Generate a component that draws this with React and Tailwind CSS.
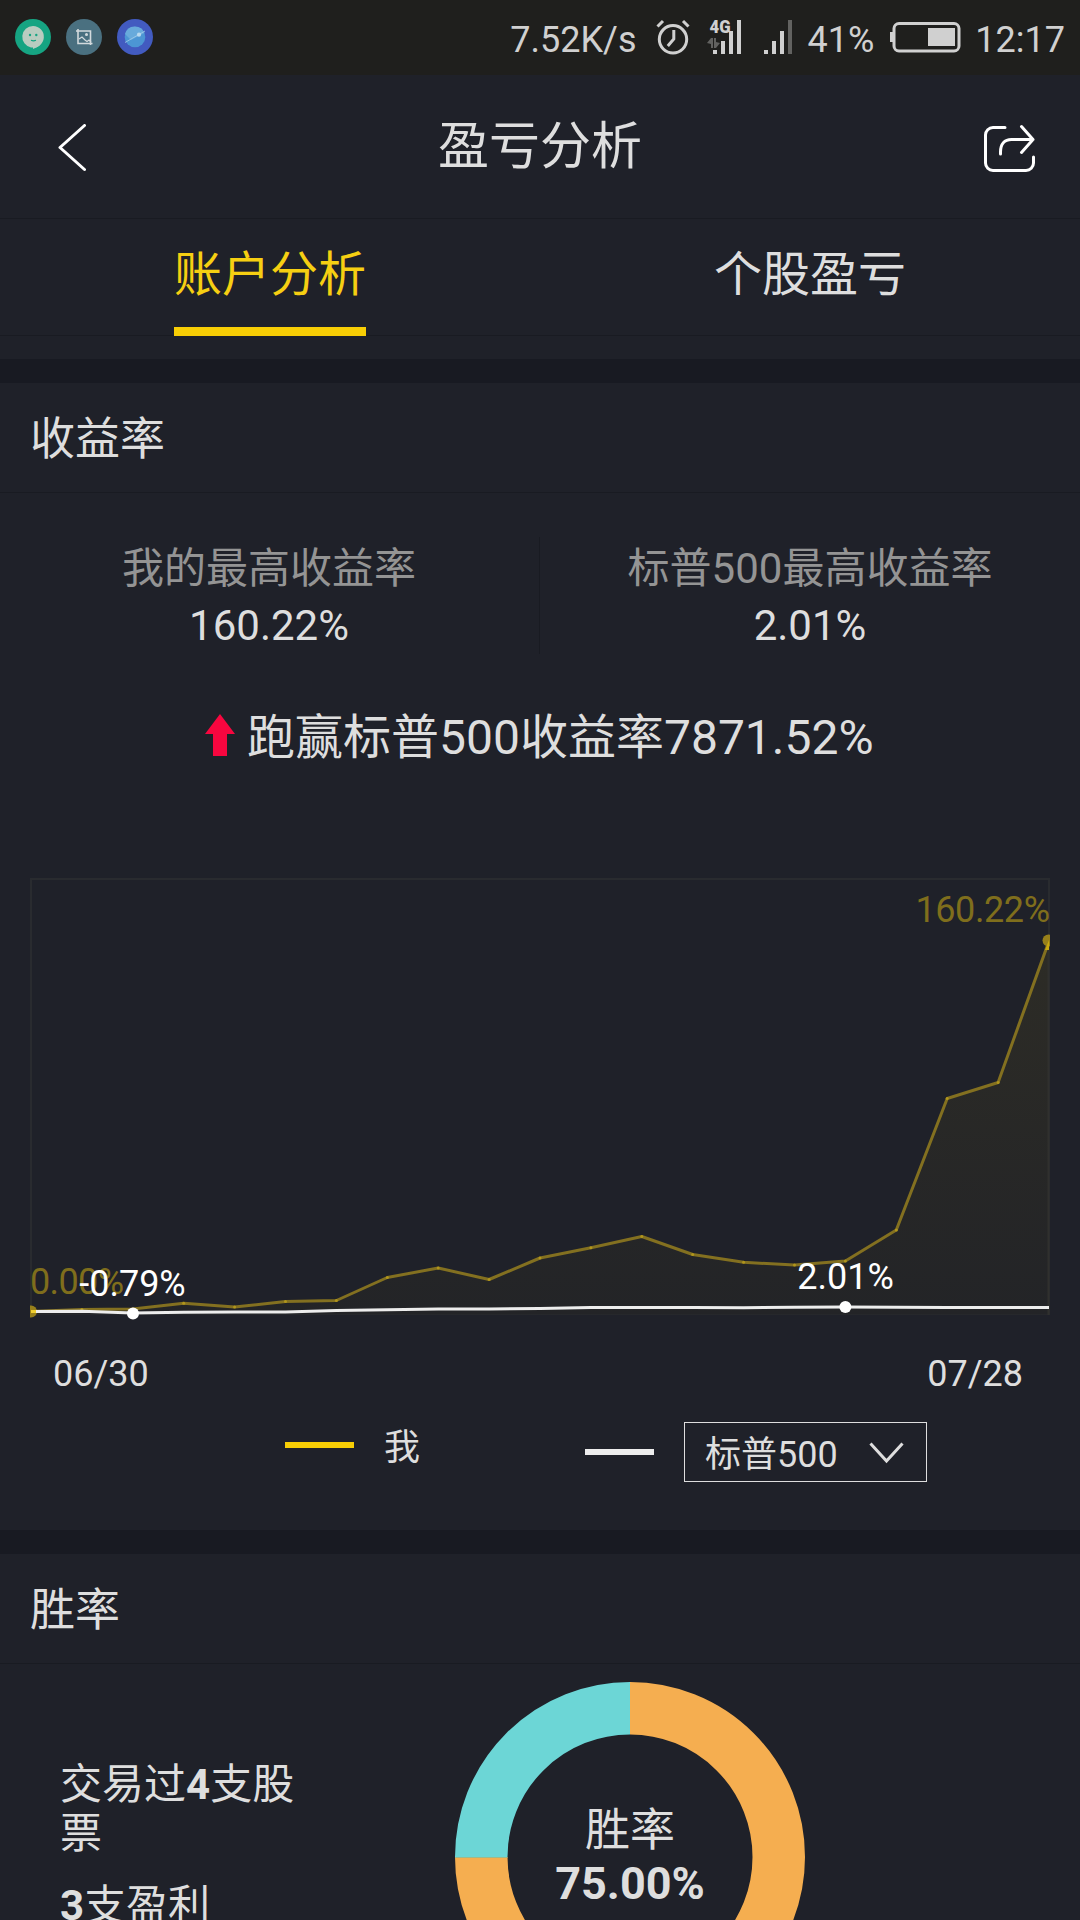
import React from "react";

const STEP = 50.9;
const mine = [
  1311.5, 1309.5, 1309, 1303.3, 1307, 1301.5, 1300.5, 1277.5, 1268, 1279.5,
  1258, 1247.7, 1236.5, 1254.5, 1262.3, 1265, 1261, 1230, 1098.5, 1082.5, 941,
];
const index = [
  1311.5, 1311.3, 1313, 1312.2, 1312, 1312, 1310.5, 1309.8, 1309, 1309,
  1308.6, 1307.5, 1307.5, 1307.5, 1307.8, 1307.2, 1307, 1307.3, 1307.5, 1307.5, 1307.5,
];
const toPoints = (values) =>
  values.map((y, i) => `${(31 + i * STEP).toFixed(1)},${y}`).join(" ");

function StatusBar() {
  return (
    <div className="flex h-[75px] shrink-0 items-center bg-[#1f1f1d] pb-px text-[36px] leading-[42px] text-[#d0d0d0]">
      <svg className="ml-[15px] h-9 w-[138px]" viewBox="15 19 138 36">
        <circle cx="33" cy="37" r="18" fill="#16a482" />
        <path d="M33 26a10.8 10.8 0 1 1-2 21.4 A10.8 10.8 0 0 1 33 26z" fill="#b9ccc0" />
        <path d="M42 42c-1 3-4 5-9 7v-4z" fill="#b9ccc0" />
        <circle cx="30" cy="35" r="1.2" fill="#16a482" />
        <circle cx="36.3" cy="35" r="1.2" fill="#16a482" />
        <path d="M31 40.3q2.500 1 5 0" fill="none" stroke="#16a482" strokeWidth="1.200" />
        <circle cx="84" cy="37" r="18" fill="#4a7080" />
        <path d="M78 29v14.500h14.500M76 31h14.500v14" fill="none" stroke="#d3dadd" strokeWidth="1.600" />
        <path d="M79 39l3-2 3 3 2 1.500 2-1.500 2 2" fill="none" stroke="#d3dadd" strokeWidth="1.200" />
        <circle cx="86.500" cy="34.500" r="1.500" fill="#d3dadd" />
        <circle cx="135" cy="37" r="18" fill="#425bc0" />
        <circle cx="135" cy="37" r="10.300" fill="#4c96d4" />
        <path d="M125 34a10.300 10.300 0 0 1 19.500-1L131 40z" fill="#68aadb" />
        <path d="M125 42.500L145 31" stroke="#a4cdea" strokeWidth="0.800" />
        <circle cx="139" cy="34.700" r="2.100" fill="#b9d9ee" />
      </svg>
      <span className="ml-auto mt-[6px]">7.52K/s</span>
      <svg className="ml-[19px] h-9 w-[138px] overflow-visible" viewBox="656 19 138 36">
        <g fill="none" stroke="#d0d0d0" strokeWidth="3">
          <circle cx="673" cy="39.300" r="13.700" />
          <path d="M657.500 26.500l5.500-5.500M688.500 26.500l-5.500-5.500" />
          <path d="M673.800 30v9l-6 7" />
        </g>
        <text x="709.500" y="33" fontSize="18.500" fontWeight="900" fill="#d0d0d0" textLength="21" lengthAdjust="spacingAndGlyphs">4G</text>
        <g fill="#d0d0d0">
          <path d="M713 50h4v4h-4zM721 41h4v13h-4zM729 31h4v23h-4zM737 20h4v34h-4z" />
          <path d="M764 50h4v4h-4zM772 41h4v13h-4zM780 31h4v23h-4z" />
        </g>
        <path d="M788 20h4v34h-4z" fill="#626260" />
        <path d="M707 43l4-5h2v10h-2v-4zM720 43l-4 5h-2V38h2v4z" fill="#626260" />
      </svg>
      <span className="ml-[14px] mt-[6px]">41%</span>
      <svg className="ml-4 h-9 w-[71px]" viewBox="890 19 71 36">
        <rect x="894" y="23.500" width="65" height="27.500" rx="5" fill="none" stroke="#d0d0d0" strokeWidth="3" />
        <path d="M890 32h3v10h-3zM928 28h27v18h-27z" fill="#d0d0d0" />
      </svg>
      <span className="ml-[14px] mr-[15px] mt-[6px]">12:17</span>
    </div>
  );
}

function Header() {
  return (
    <div className="grid h-36 shrink-0 grid-cols-3 items-center border-b border-[#191b22]">
      <svg className="ml-[55px] mt-[2px] h-12 w-9" viewBox="56 124 36 48">
        <path d="M85.500 125.500L61 147.500L85.500 169.500" fill="none" stroke="#fff" strokeWidth="3" strokeLinecap="round" strokeLinejoin="round" />
      </svg>
      <h1 className="text-center text-[51px] leading-[60px]">盈亏分析</h1>
      <svg className="ml-auto mr-[43px] mt-1 h-[50px] w-[54px]" viewBox="983 124 54 50">
        <g fill="none" stroke="#fff" strokeWidth="3" strokeLinecap="round" strokeLinejoin="round">
          <path d="M1005 127.500H993a7.500 7.500 0 0 0-7.500 7.500v28a7.500 7.500 0 0 0 7.500 7.500h33a7.500 7.500 0 0 0 7.500-7.500V157" />
          <path d="M1000.500 154v-2c0-8 4-12.500 11-12.500h21.500M1021.500 126.500l11.500 13-11.500 13" />
        </g>
      </svg>
    </div>
  );
}

function Tabs() {
  return (
    <div className="grid h-[117px] shrink-0 grid-cols-2 border-b border-[#191b22] text-[48px]">
      <div className="flex justify-center">
        <div className="-mb-px w-48 border-b-[9px] border-[#f8ce05] pt-1 text-center leading-[104px] text-[#f6cf12]">账户分析</div>
      </div>
      <div className="pt-1 text-center leading-[104px]">个股盈亏</div>
    </div>
  );
}

function SectionTitle({ children }) {
  return (
    <h2 className="h-[110px] shrink-0 border-b border-[#191b22] pl-[30px] text-[45px] leading-[113px]">{children}</h2>
  );
}

function Stat({ label, value, className }) {
  return (
    <div className={className}>
      <div className="text-[#949494]">{label}</div>
      <div>{value}</div>
    </div>
  );
}

function ReturnChart() {
  const line = toPoints(mine);
  return (
    <svg className="mx-[30px] mt-[103px] h-[443px] w-[1020px] shrink-0" viewBox="30 877 1020 443">
      <defs>
        <linearGradient id="area" x1="0" y1="0" x2="0" y2="1">
          <stop offset="0" stopColor="#2d2c26" />
          <stop offset="1" stopColor="#232427" />
        </linearGradient>
      </defs>
      <rect x="31" y="879" width="1018" height="435" fill="none" stroke="#292b2f" strokeWidth="2" />
      <polygon points={`${line} 1049,1314.500 31,1314.500`} fill="url(#area)" />
      <path d="M1048.500 944V1315" stroke="#30302e" strokeWidth="2" />
      <text x="30" y="1294" fontSize="36" fill="#7f6e1c" textLength="94">0.00%</text>
      <text x="915.500" y="922" fontSize="36" fill="#7f6e1c" textLength="134.500">160.22%</text>
      <polyline points={line} fill="none" stroke="#837020" strokeWidth="3" strokeLinejoin="round" />
      {mine.map((y, i) => (
        <circle key={i} cx={31 + i * STEP} cy={y} r="1.500" fill="#b0951c" />
      ))}
      <circle cx="31" cy="1311.500" r="6" fill="#98801a" />
      <circle cx="1048.500" cy="940.500" r="6" fill="#98801a" />
      <path d="M1045 950l4-10v10z" fill="#c9a90f" />
      <polyline points={toPoints(index)} fill="none" stroke="#ededed" strokeWidth="3" strokeLinejoin="round" />
      <path d="M31 1311.500h5" stroke="#f0cf30" strokeWidth="3" />
      <circle cx="133" cy="1313.500" r="6" fill="#fff" />
      <circle cx="845.400" cy="1307" r="6" fill="#fff" />
      <g fontSize="36" fill="#fff" textAnchor="middle">
        <text x="132.500" y="1296">-0.79%</text>
        <text x="845.500" y="1289">2.01%</text>
      </g>
    </svg>
  );
}

function Legend() {
  return (
    <div className="mt-7 flex h-[60px] shrink-0 items-center text-[36px]">
      <div className="ml-[285px] flex items-center pb-[14px]">
        <div className="h-1.5 w-[69px] bg-[#f8ce05]" />
        <span className="ml-[30px] mt-[5px] leading-[42px]">我</span>
      </div>
      <div className="ml-[165px] h-1.5 w-[69px] bg-[#ededed]" />
      <div className="ml-[30px] flex h-[60px] w-[243px] items-center border border-[#dedede] pl-[20px]">
        <span className="mt-[5px] leading-[42px]">标普500</span>
        <svg className="-mt-px ml-[30px] h-6 w-9" viewBox="868 1439 36 24">
          <path d="M870.500 1442.500L886.500 1460L902.500 1442.500" fill="none" stroke="#dedede" strokeWidth="3" />
        </svg>
      </div>
    </div>
  );
}

function WinRate() {
  return (
    <div className="flex shrink-0">
      <div className="ml-[60px] mt-24 w-[240px] text-[42px] leading-[49px]">
        <p>交易过<b>4</b>支股票</p>
        <p className="mt-[23px]"><b>3</b>支盈利</p>
      </div>
      <svg className="ml-[155px] mt-[18px] h-[350px] w-[350px]" viewBox="0 0 350 350">
        <path d="M175 26.250A148.750 148.750 0 1 1 26.250 175" fill="none" stroke="#f5ae50" strokeWidth="52.500" />
        <path d="M26.250 175A148.750 148.750 0 0 1 175 26.250" fill="none" stroke="#6cd6d6" strokeWidth="52.500" />
        <path d="M0 175.500h52.500" stroke="#9fb98a" strokeWidth="1" />
        <g textAnchor="middle" fontSize="45" fill="#dedede">
          <text x="175" y="164">胜率</text>
          <text x="175" y="216.500" fontWeight="700">75.00%</text>
        </g>
      </svg>
    </div>
  );
}

export default function App() {
  return (
    <div className="flex h-[1920px] w-[1080px] flex-col overflow-hidden bg-[#1f2129] font-[Roboto,'Noto_Sans_CJK_SC',sans-serif] text-[#dedede]">
      <StatusBar />
      <Header />
      <Tabs />
      <div className="mt-[23px] h-6 shrink-0 bg-[#181a22]" />
      <SectionTitle>收益率</SectionTitle>
      <div className="mt-11 grid h-[116px] shrink-0 grid-cols-2 text-center text-[42px] leading-[57px]">
        <Stat className="border-r border-[#191b22] pr-px pt-[3px]" label="我的最高收益率" value="160.22%" />
        <Stat className="pt-[3px]" label="标普500最高收益率" value="2.01%" />
      </div>
      <div className="mt-[49px] flex h-[72px] shrink-0 items-center pl-[205px] text-[48px] leading-[72px]">
        <svg className="mb-[6px] mr-3 h-[42px] w-[30px]" viewBox="0 0 30 42">
          <path d="M15 0L30 20H22V42H8V20H0z" fill="#f8063f" />
        </svg>
        跑赢标普500收益率7871.52%
      </div>
      <ReturnChart />
      <div className="mt-[34px] flex h-10 shrink-0 justify-between pl-[53px] pr-[57px] text-[36px] leading-10">
        <span>06/30</span>
        <span>07/28</span>
      </div>
      <Legend />
      <div className="mt-12 h-6 shrink-0 bg-[#181a22]" />
      <SectionTitle>胜率</SectionTitle>
      <WinRate />
    </div>
  );
}
